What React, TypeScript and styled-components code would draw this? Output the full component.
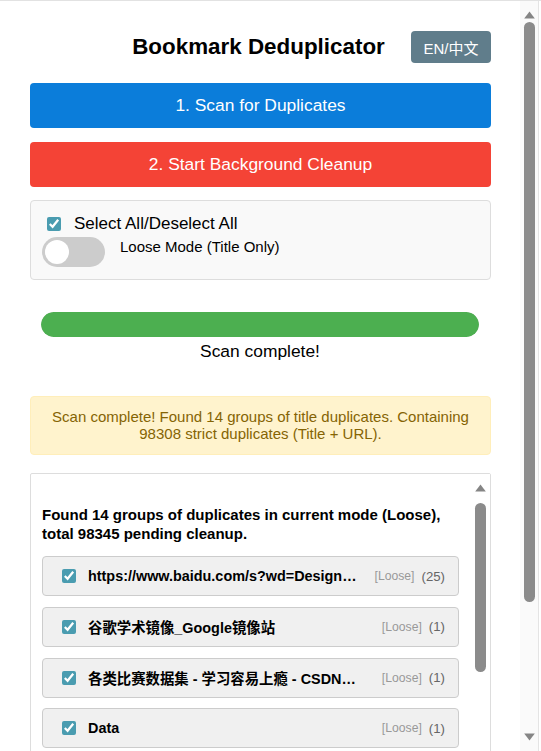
import React, { useState } from "react";
import styled, { createGlobalStyle } from "styled-components";

const Global = createGlobalStyle`
  body {
    margin: 0;
    border-top: 1px solid #e2e2e2;
    background: #ffffff;
    font-family: "Liberation Sans", Arial, "Noto Sans CJK SC", sans-serif;
    color: #000;
  }
  * { box-sizing: border-box; }
`;

const Page = styled.div`
  width: 461px;
  margin-left: 30px;
  padding: 30px 0 24px;
  display: flex;
  flex-direction: column;
`;

/* drawn scrollbars (the renderer hides native ones) */
const PageScrollbar = styled.div`
  position: fixed;
  top: 1px;
  right: 2px;
  bottom: 0;
  width: 19px;
  background: #fafafa;
  border-right: 1px solid #e4e4e4;
  display: flex;
  flex-direction: column;
  align-items: center;
`;

const ListScrollbar = styled.div`
  width: 17px;
  flex-shrink: 0;
  padding-right: 2px;
  display: flex;
  flex-direction: column;
  align-items: center;
  background: #ffffff;
`;

const Arrow = styled.svg<{ $mt?: number; $mb?: number }>`
  display: block;
  flex-shrink: 0;
  margin-top: ${(p) => p.$mt ?? 0}px;
  margin-bottom: ${(p) => p.$mb ?? 0}px;
`;

const Thumb = styled.div<{ $h: number; $mt: number }>`
  width: 11px;
  height: ${(p) => p.$h}px;
  margin-top: ${(p) => p.$mt}px;
  border-radius: 6px;
  background: #8b8b8b;
  flex-shrink: 0;
`;

const Spacer = styled.div`
  flex: 1;
`;

const UpArrow = ({ mt }: { mt: number }) => (
  <Arrow $mt={mt} width="11" height="8" viewBox="0 0 11 8">
    <path d="M5.5 0.5 L10.8 7.5 L0.2 7.5 Z" fill="#858585" />
  </Arrow>
);

const DownArrow = ({ mb }: { mb: number }) => (
  <Arrow $mb={mb} width="11" height="8" viewBox="0 0 11 8">
    <path d="M0.2 0.5 L10.8 0.5 L5.5 7.5 Z" fill="#858585" />
  </Arrow>
);

const Header = styled.header`
  display: grid;
  grid-template-columns: 1fr auto 1fr;
  align-items: center;
  height: 32px;
  margin-bottom: 20px;
`;

const Title = styled.h1`
  grid-column: 2;
  margin: 0 4px 0 0;
  font-size: 22.4px;
  font-weight: bold;
  white-space: nowrap;
`;

const LangButton = styled.button`
  grid-column: 3;
  justify-self: end;
  width: 80px;
  height: 32px;
  border: none;
  border-radius: 4px;
  background: #607d8b;
  color: #fff;
  font-family: "Liberation Sans", Arial, "Noto Sans CJK SC", sans-serif;
  font-size: 15px;
  cursor: pointer;
`;

const ActionButton = styled.button<{ $bg: string; $mb: number }>`
  height: 45px;
  width: 100%;
  border: none;
  border-radius: 4px;
  background: ${(p) => p.$bg};
  color: #fff;
  font-family: "Liberation Sans", Arial, sans-serif;
  font-size: 17.4px;
  margin-bottom: ${(p) => p.$mb}px;
  cursor: pointer;
`;

const Options = styled.div`
  height: 80px;
  background: #f9f9f9;
  border: 1px solid #dddddd;
  border-radius: 4px;
  padding: 14px 11px 12px;
  display: flex;
  flex-direction: column;
  gap: 4px;
`;

const CheckRow = styled.label`
  display: flex;
  align-items: center;
  gap: 13px;
  height: 18px;
  font-size: 17px;
`;

const Check = styled.input.attrs({ type: "checkbox" })<{ $ml?: number }>`
  width: 14px;
  height: 14px;
  margin: 0 0 0 ${(p) => p.$ml ?? 0}px;
  accent-color: #4a9cb0;
  flex-shrink: 0;
`;

const SwitchRow = styled.div`
  display: flex;
  align-items: flex-start;
  gap: 15px;
`;

const Switch = styled.span<{ $on: boolean }>`
  position: relative;
  width: 63px;
  height: 30px;
  border-radius: 15px;
  background: ${(p) => (p.$on ? "#4a9cb0" : "#cccccc")};
  flex-shrink: 0;
  cursor: pointer;
  &::after {
    content: "";
    position: absolute;
    top: 3px;
    left: ${(p) => (p.$on ? "36px" : "3px")};
    width: 24px;
    height: 24px;
    border-radius: 50%;
    background: #fff;
  }
`;

const SwitchText = styled.span`
  font-size: 15px;
  line-height: 17px;
  margin-top: 1px;
`;

const ProgressWrap = styled.div`
  margin: 32px 12px 0 11px;
  display: flex;
  flex-direction: column;
  align-items: center;
`;

const Track = styled.div`
  width: 100%;
  height: 25px;
  border-radius: 12.5px;
  background: #e0e0e0;
  overflow: hidden;
`;

const Fill = styled.div`
  height: 100%;
  background: #4caf50;
  border-radius: 12.5px;
`;

const Status = styled.div`
  margin-top: 4px;
  font-size: 17.4px;
  line-height: 20px;
`;

const Alert = styled.div`
  margin-top: 35px;
  background: #fff3cd;
  border: 1px solid #ffeeba;
  border-radius: 4px;
  color: #856404;
  padding: 12px 16px;
  font-size: 15px;
  line-height: 16.6px;
  text-align: center;
`;

const ListBox = styled.div`
  margin-top: 18px;
  border: 1px solid #dddddd;
  border-radius: 2px;
  height: 400px;
  display: flex;
`;

const ListContent = styled.div`
  flex: 1;
  min-width: 0;
  overflow: hidden;
  padding: 12px 14px 12px 11px;
`;

const Summary = styled.p`
  margin: 19px 0 13px;
  font-size: 15px;
  font-weight: bold;
  line-height: 19px;
  strong { font-weight: 900; }
`;

const Group = styled.div`
  height: 40px;
  background: #f0f0f0;
  border: 1px solid #cccccc;
  border-radius: 4px;
  display: flex;
  align-items: center;
  padding: 0 13px 0 19px;
  margin-bottom: 10.7px;
`;

const GroupTitle = styled.span`
  flex: 1;
  min-width: 0;
  margin-left: 12px;
  margin-right: 12px;
  font-size: 14.4px;
  font-weight: bold;
  white-space: nowrap;
  overflow: hidden;
  text-overflow: ellipsis;
  font-family: "Liberation Sans", Arial, "Noto Sans CJK SC", sans-serif;
`;

const Tag = styled.span`
  font-size: 12.2px;
  color: #999999;
  white-space: nowrap;
`;

const Count = styled.span`
  margin-left: 7px;
  font-size: 13.2px;
  color: #666666;
  white-space: nowrap;
`;

const groups = [
  { title: "https://www.baidu.com/s?wd=Design%20Pattern%20Tutorial", count: 25 },
  { title: "谷歌学术镜像_Google镜像站", count: 1 },
  { title: "各类比赛数据集 - 学习容易上瘾 - CSDN博客", count: 1 },
  { title: "Data", count: 1 },
  { title: "GitHub - Where the world builds software", count: 1 },
  { title: "百度翻译-200种语言互译、沟通全世界！", count: 1 },
  { title: "Stack Overflow - Where Developers Learn", count: 1 },
  { title: "知乎 - 有问题，就会有答案", count: 1 },
  { title: "MDN Web Docs", count: 1 },
  { title: "哔哩哔哩 (゜-゜)つロ 干杯~-bilibili", count: 1 },
  { title: "Kaggle: Your Machine Learning Community", count: 1 },
  { title: "新建文件夹", count: 1 },
  { title: "Python documentation", count: 1 },
  { title: "LeetCode - The World's Leading Platform", count: 1 },
];

export default function App() {
  const [loose, setLoose] = useState(false);
  return (
    <>
      <Global />
      <Page>
        <Header>
          <Title>Bookmark Deduplicator</Title>
          <LangButton>EN/中文</LangButton>
        </Header>
        <ActionButton $bg="#0b7dda" $mb={14}>1. Scan for Duplicates</ActionButton>
        <ActionButton $bg="#f44336" $mb={13}>2. Start Background Cleanup</ActionButton>
        <Options>
          <CheckRow>
            <Check defaultChecked $ml={5} />
            Select All/Deselect All
          </CheckRow>
          <SwitchRow>
            <Switch $on={loose} onClick={() => setLoose(!loose)} />
            <SwitchText>Loose Mode (Title Only)</SwitchText>
          </SwitchRow>
        </Options>
        <ProgressWrap>
          <Track>
            <Fill style={{ width: "100%" }} />
          </Track>
          <Status>Scan complete!</Status>
        </ProgressWrap>
        <Alert>
          Scan complete! Found 14 groups of title duplicates. Containing 98308 strict duplicates (Title + URL).
        </Alert>
        <ListBox>
          <ListContent>
            <Summary>
              Found 14 groups of duplicates in current mode (<strong>Loose</strong>), total 98345 pending cleanup.
            </Summary>
            {groups.map((g, i) => (
              <Group key={i}>
                <Check defaultChecked />
                <GroupTitle>{g.title}</GroupTitle>
                <Tag>[Loose]</Tag>
                <Count>({g.count})</Count>
              </Group>
            ))}
          </ListContent>
          <ListScrollbar aria-hidden>
            <UpArrow mt={10} />
            <Thumb $h={169} $mt={11} />
          </ListScrollbar>
        </ListBox>
      </Page>
      <PageScrollbar aria-hidden>
        <UpArrow mt={10} />
        <Thumb $h={580} $mt={3} />
        <Spacer />
        <DownArrow mb={10} />
      </PageScrollbar>
    </>
  );
}
